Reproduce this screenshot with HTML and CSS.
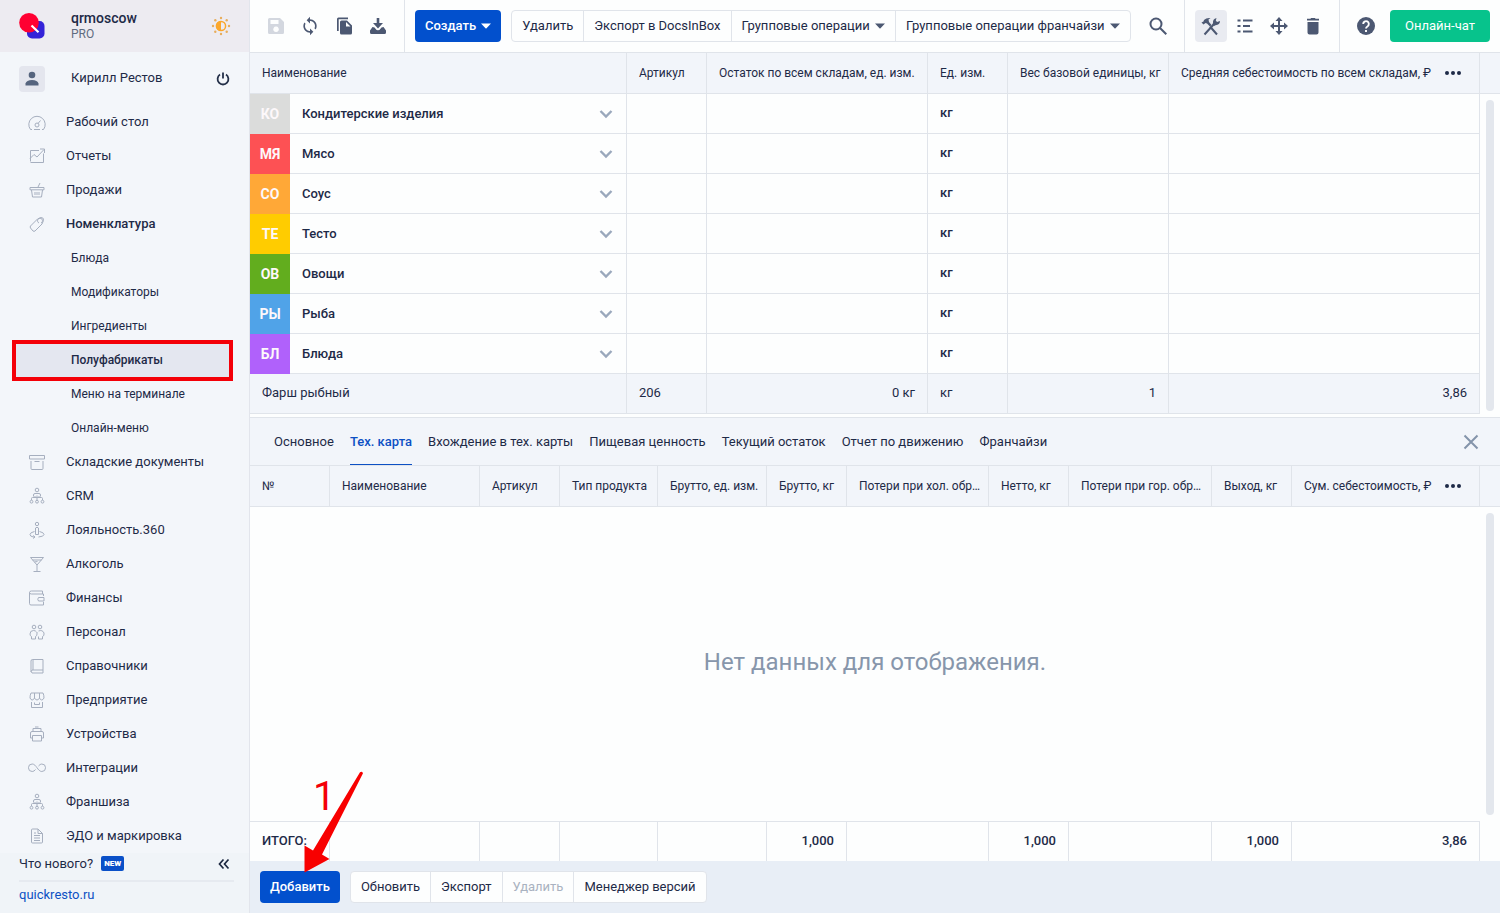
FILE: index.html
```html
<!DOCTYPE html>
<html lang="ru">
<head>
<meta charset="utf-8">
<title>Полуфабрикаты — Quick Resto</title>
<link rel="stylesheet" href="styles.css">
</head>
<body>
<svg class="sprite" aria-hidden="true">
  <symbol id="org" viewBox="0 0 18 18"><circle cx="9" cy="3" r="1.8"/><path d="M5.5 9.500V8q0-1.500 1.500-1.500h4q1.500 0 1.500 1.500v1.500M3.500 13v-1.500q0-1 1-1h9q1 0 1 1V13M9 8.500V13M7 9v1.500M11 9v1.500"/><circle cx="3.500" cy="14.700" r="1.400"/><circle cx="9" cy="14.700" r="1.400"/><circle cx="14.500" cy="14.700" r="1.400"/></symbol>
  <symbol id="chev" viewBox="0 0 14 14"><path d="M1.500 4L7 9.500 12.500 4" fill="none" stroke="currentColor" stroke-width="2.400"/></symbol>
  <symbol id="caret" viewBox="0 0 10 6"><path d="M0 .5h10L5.500 5.300q-.5.5-1 0z" fill="currentColor"/></symbol>
</svg>

<div class="app">
  <aside class="sidebar">
    <header class="brand">
      <svg class="logo" viewBox="0 0 26 26"><rect x="8" y="8" width="17.500" height="17.500" rx="5" fill="#3422d8"/><circle cx="10" cy="9.800" r="9.800" fill="#ff0032"/><path d="M12.500 12.500l7 6.700" stroke="#fff" stroke-width="2.200"/></svg>
      <div class="brand-text"><strong>qrmoscow</strong><span>PRO</span></div>
      <button class="plain sun" aria-label="Тема"><svg viewBox="0 0 20 20" width="20" height="20"><g fill="#e8ad5c"><circle cx="10" cy="2" r="1.200"/><circle cx="10" cy="18" r="1.200"/><circle cx="2" cy="10" r="1.200"/><circle cx="18" cy="10" r="1.200"/><circle cx="4.300" cy="4.300" r="1.200"/><circle cx="15.700" cy="4.300" r="1.200"/><circle cx="4.300" cy="15.700" r="1.200"/><circle cx="15.700" cy="15.700" r="1.200"/></g><circle cx="10" cy="10" r="4.600" fill="none" stroke="#fba72c" stroke-width="1.500"/><path d="M10 5a5 5 0 0 0 0 10z" fill="#fba72c"/></svg></button>
    </header>
    <div class="user">
      <span class="avatar"><svg viewBox="0 0 16 16" width="16" height="16" fill="#55647e"><circle cx="8" cy="4" r="3.300"/><path d="M1.500 14.500v-2Q2.500 9 8 9t6.500 3.500v2z"/></svg></span>
      <span class="user-name">Кирилл Рестов</span>
      <button class="plain" aria-label="Выход"><svg viewBox="0 0 14 14" width="14" height="14" fill="none" stroke="#243049" stroke-width="1.800"><path d="M7 .5v6M4 2.600a5.400 5.400 0 1 0 6 0"/></svg></button>
    </div>
    <nav class="nav">
      <a href="#"><svg viewBox="0 -1 18 18"><path d="M2.500 15.500a8.200 8.200 0 1 1 13 0h-1.500M2.500 15.500H4M6 15.500h6M10 9.500l2.500-3"/><circle cx="9" cy="11" r="2"/></svg>Рабочий стол</a>
      <a href="#"><svg viewBox="0 0 18 18"><path d="M11 3.500H2.500v11M15.500 6.500v9h-13M2 11.500l4-4 3 2.500 7-7.500M12 2h4.500v4"/></svg>Отчеты</a>
      <a href="#"><svg viewBox="0 0 18 18"><path d="M2 6.500h14v2.300H2zM3.500 9l1 7h9l1-7M10 6l2-4M7 11v3M9 11v3M11 11v3"/></svg>Продажи</a>
      <a href="#" class="open"><svg viewBox="0 0 18 18"><path d="M2.500 11l7-7 3.500-1.500q3 0 2.500 3L14 9l-7 7q-1 .7-2 0l-2.500-3q-.7-1 0-2zM11 8a2.500 2.500 0 1 1 2 0"/></svg>Номенклатура</a>
      <a href="#" class="sub">Блюда</a>
      <a href="#" class="sub">Модификаторы</a>
      <a href="#" class="sub">Ингредиенты</a>
      <a href="#" class="sub current" aria-current="page">Полуфабрикаты</a>
      <a href="#" class="sub">Меню на терминале</a>
      <a href="#" class="sub">Онлайн-меню</a>
      <a href="#"><svg viewBox="0 0 18 18"><path d="M1.500 2.500h15V6h-15zM3 8v7.500q0 1 1 1h10q1 0 1-1V8M6.500 8.500h5"/></svg>Складские документы</a>
      <a href="#"><svg><use href="#org"/></svg>CRM</a>
      <a href="#"><svg viewBox="0 0 18 18"><circle cx="9" cy="3" r="1.700"/><path d="M7.500 13.500V7q1.500-1.500 3 0v6.500zM6.500 10.500q-4.500 1-4.500 3t3.500 2.500l1.500 0M11.500 10.500q4.500 1 4.500 3t-5.500 2.500M5 14.500l2 1.500-2 1.500"/></svg>Лояльность.360</a>
      <a href="#"><svg viewBox="0 0 18 18"><path d="M2.500 2.500h13L9 10zM4.500 5h9M6.500 7l3-.5M9 10v6M5.500 16.500h7"/></svg>Алкоголь</a>
      <a href="#"><svg viewBox="0 0 18 18"><path d="M15.500 7V5H3.500Q1.500 5 1.500 3.500t2-1.500h11v3M1.500 3.500v11q0 1.500 1.500 1.500h12.500v-3M10.500 8.500h5.500v3.500h-5.500q-1.500-1.800 0-3.500z"/></svg>Финансы</a>
      <a href="#"><svg viewBox="0 0 18 18"><circle cx="6" cy="4" r="1.800"/><circle cx="12" cy="4" r="1.800"/><path d="M8.500 9q-1-1.500-3-1.500Q2 7.500 2 11q0 2 1.500 2.500v2.500h4v-2.500Q9 13 9 11V9M10.500 8q4-1.500 5.500 2 .5 3-1.500 3.500V16h-4v-2.500"/></svg>Персонал</a>
      <a href="#"><svg viewBox="0 0 18 18"><path d="M3 15V4q0-1.500 1.500-1.500H15v13.500H4q-1.500-1.500 0-3h11M5 2.500V13"/></svg>Справочники</a>
      <a href="#"><svg viewBox="0 0 18 18"><path d="M3 2h12q1 2 1 5-1 2-2.300 2T11.500 7q-1 2-2.500 2T6.500 7q-1 2-2.300 2T2 7q0-3 1-5zM6.500 2v5M11.500 2v5M3.500 11v5.500h11V11M6.500 11.500v2h5v-2"/></svg>Предприятие</a>
      <a href="#"><svg viewBox="0 0 18 18"><path d="M5 6V3.500h8V6M7 2h3.500M4 13H2.500V8q0-1.500 1.500-1.500h10q1.500 0 1.500 1.500v5H14M4.500 10.500h9v5.500h-9z"/></svg>Устройства</a>
      <a href="#"><svg viewBox="0 0 18 18"><path d="M10.500 7q1.500-2 3.300-2a3.600 3.600 0 1 1 0 7.500c-4 0-5.500-7.500-9.600-7.500a3.600 3.600 0 1 0 0 7.500q2 0 3.300-2"/></svg>Интеграции</a>
      <a href="#"><svg><use href="#org"/></svg>Франшиза</a>
      <a href="#"><svg viewBox="0 0 18 18"><path d="M4.500 2H10l4.500 4.500V15q0 1-1 1h-9q-1 0-1-1V3q0-1 1-1zM10 2v4.500h4.500M6 8.500h6M6 11h6M6 6h2M6 13.500h6"/></svg>ЭДО и маркировка</a>
    </nav>
    <footer class="side-foot">
      <div class="whats-new"><a href="#">Что нового?</a><span class="badge">NEW</span>
        <button class="plain" aria-label="Свернуть меню"><svg viewBox="0 0 12 12" width="12" height="12" fill="none" stroke="#1b2740" stroke-width="1.700"><path d="M5.500 1.500L1.500 6l4 4.500M10.500 1.500L6.500 6l4 4.500"/></svg></button></div>
      <a class="site" href="#">quickresto.ru</a>
    </footer>
  </aside>

  <main class="main">
    <div class="toolbar">
      <div class="tools">
        <button class="tool off" aria-label="Сохранить" disabled><svg viewBox="0 0 20 20"><path fill-rule="evenodd" d="M3.500 2H14l4 4v10.500q0 1.500-1.500 1.500h-13Q2 18 2 16.500v-13Q2 2 3.500 2zM4.500 4v4h8V4zM10 10.500a2.800 2.800 0 1 0 .1 0z"/></svg></button>
        <button class="tool" aria-label="Обновить"><svg viewBox="0 0 24 24"><path d="M12 4V1L8 5l4 4V6c3.310 0 6 2.690 6 6 0 1.010-.25 1.970-.7 2.800l1.460 1.460C19.540 15.030 20 13.570 20 12c0-4.420-3.580-8-8-8zm0 14c-3.310 0-6-2.690-6-6 0-1.010.25-1.970.7-2.800L5.240 7.740C4.460 8.970 4 10.430 4 12c0 4.420 3.580 8 8 8v3l4-4-4-4v3z"/></svg></button>
        <button class="tool" aria-label="Копировать"><svg viewBox="0 0 20 20"><path d="M3 15V3q0-1.500 1.500-1.500H14v1.700H4.700V15z"/><path fill-rule="evenodd" d="M7.500 4.500H13l5 5v7.500q0 1.500-1.500 1.500h-9Q6 18.500 6 17V6q0-1.500 1.500-1.500zM12 6v4.500h4.500z"/></svg></button>
        <button class="tool" aria-label="Загрузить"><svg viewBox="0 0 20 20"><path d="M8.700 2h2.600v5H15l-5 5.500L5 7h3.700z"/><path d="M4.500 11l2 .5Q10 17 13.500 11.500l2-.5L18 14.500v2q0 1.500-1.500 1.500h-13Q2 18 2 16.500v-2z"/></svg></button>
      </div>
      <div class="actions">
        <button class="btn primary">Создать <svg class="caret"><use href="#caret"/></svg></button>
        <div class="group">
          <button>Удалить</button><button>Экспорт в DocsInBox</button><button>Групповые операции <svg class="caret"><use href="#caret"/></svg></button><button>Групповые операции франчайзи <svg class="caret"><use href="#caret"/></svg></button>
        </div>
        <button class="tool search" aria-label="Поиск"><svg viewBox="0 0 20 20" fill="none" stroke="currentColor" stroke-width="2"><circle cx="8" cy="8" r="5.500"/><path d="M12 12l6.300 6.300"/></svg></button>
      </div>
      <div class="tools">
        <button class="tool on" aria-label="Настройки"><svg viewBox="0 0 20 20"><path d="M3.500 18.500L13 8M9 10.500l7 8" stroke="currentColor" stroke-width="2" fill="none"/><path d="M.5 6.500l2-1L3 4Q5.500 1.500 9.500 2L7.500 3.500 8 6l2.500 3-1.500 1.500L6 7.500 4.500 7 2.500 8.500zM12 7q-.5-4 3.500-5l-.7 2.500L16 6l3-1q0 4-4.500 4.200L13 10l-1.500-1.500z"/></svg></button>
        <button class="tool" aria-label="Список"><svg viewBox="0 0 20 20"><path d="M2.500 3.500h3v2h-3zM2.500 9h3v2h-3zM2.500 14.500h3v2h-3zM8 3.500h9.500v2H8zM8 9h7v2H8zM8 14.500h9.500v2H8z"/></svg></button>
        <button class="tool" aria-label="Переместить"><svg viewBox="0 0 20 20"><path d="M10 1l3.500 4H11v4h4V6.500l4 3.500-4 3.500V11h-4v4h2.500L10 19l-3.500-4H9v-4H5v2.500L1 10l4-3.500V9h4V5H6.500z"/></svg></button>
        <button class="tool" aria-label="Удалить запись"><svg viewBox="0 0 20 20"><path d="M4.500 6h11v10.500q0 2-2 2h-7q-2 0-2-2zM4 2.800h3.500L8 2h4l.5.800H16v1.800H4z"/></svg></button>
      </div>
      <div class="help">
        <button class="tool" aria-label="Помощь"><svg viewBox="0 0 20 20"><circle cx="10" cy="10" r="9"/><path d="M7.200 8a2.800 2.800 0 1 1 4.500 2.200Q10 11.300 10 12.500M10 14v2" fill="none" stroke="#fff" stroke-width="1.900"/></svg></button>
        <button class="btn chat">Онлайн-чат</button>
      </div>
    </div>

    <section class="list">
      <table class="grid">
        <colgroup><col><col class="w80"><col class="w221"><col class="w80"><col class="w161"><col class="w311"><col class="w20"></colgroup>
        <thead><tr><th>Наименование</th><th>Артикул</th><th>Остаток по всем складам, ед. изм.</th><th>Ед. изм.</th><th>Вес базовой единицы, кг</th><th><div class="last">Средняя себестоимость по всем складам, ₽<button class="plain dots" aria-label="Колонки"><i></i><i></i><i></i></button></div></th><td></td></tr></thead>
        <tbody>
          <tr class="cat"><td><div class="name"><span class="tile gray">КО</span>Кондитерские изделия<svg><use href="#chev"/></svg></div></td><td></td><td></td><td>кг</td><td></td><td></td></tr>
          <tr class="cat"><td><div class="name"><span class="tile red">МЯ</span>Мясо<svg><use href="#chev"/></svg></div></td><td></td><td></td><td>кг</td><td></td><td></td></tr>
          <tr class="cat"><td><div class="name"><span class="tile orange">СО</span>Соус<svg><use href="#chev"/></svg></div></td><td></td><td></td><td>кг</td><td></td><td></td></tr>
          <tr class="cat"><td><div class="name"><span class="tile yellow">ТЕ</span>Тесто<svg><use href="#chev"/></svg></div></td><td></td><td></td><td>кг</td><td></td><td></td></tr>
          <tr class="cat"><td><div class="name"><span class="tile green">ОВ</span>Овощи<svg><use href="#chev"/></svg></div></td><td></td><td></td><td>кг</td><td></td><td></td></tr>
          <tr class="cat"><td><div class="name"><span class="tile blue">РЫ</span>Рыба<svg><use href="#chev"/></svg></div></td><td></td><td></td><td>кг</td><td></td><td></td></tr>
          <tr class="cat"><td><div class="name"><span class="tile violet">БЛ</span>Блюда<svg><use href="#chev"/></svg></div></td><td></td><td></td><td>кг</td><td></td><td></td></tr>
          <tr class="picked"><td>Фарш рыбный</td><td>206</td><td class="num">0 кг</td><td>кг</td><td class="num">1</td><td class="num">3,86</td></tr>
        </tbody>
      </table>
      <div class="scroll"></div>
    </section>

    <section class="detail">
      <div class="tabs">
        <button>Основное</button><button class="sel">Тех. карта</button><button>Вхождение в тех. карты</button><button>Пищевая ценность</button><button>Текущий остаток</button><button>Отчет по движению</button><button>Франчайзи</button>
        <button class="plain close" aria-label="Закрыть"><svg viewBox="0 0 16 16" width="16" height="16" stroke="#8494aa" stroke-width="2"><path d="M1.500 1.500l13 13M14.500 1.500l-13 13"/></svg></button>
      </div>
      <div class="card">
        <table class="grid fill">
          <colgroup><col class="w80"><col><col class="w80"><col class="w98"><col class="w109"><col class="w80"><col class="w142"><col class="w80"><col class="w143"><col class="w80"><col class="w188"><col class="w20"></colgroup>
          <thead><tr><th>№</th><th>Наименование</th><th>Артикул</th><th>Тип продукта</th><th>Брутто, ед. изм.</th><th>Брутто, кг</th><th>Потери при хол. обр…</th><th>Нетто, кг</th><th>Потери при гор. обр…</th><th>Выход, кг</th><th><div class="last">Сум. себестоимость, ₽<button class="plain dots" aria-label="Колонки"><i></i><i></i><i></i></button></div></th><td></td></tr></thead>
          <tbody><tr><td class="empty" colspan="12">Нет данных для отображения.</td></tr></tbody>
          <tfoot><tr><td>ИТОГО:</td><td></td><td></td><td></td><td></td><td class="num">1,000</td><td></td><td class="num">1,000</td><td></td><td class="num">1,000</td><td class="num">3,86</td><td></td></tr></tfoot>
        </table>
        <div class="scroll"></div>
      </div>
      <div class="bottom">
        <button class="btn primary">Добавить</button>
        <div class="group"><button>Обновить</button><button>Экспорт</button><button disabled>Удалить</button><button>Менеджер версий</button></div>
        <div class="hint"><span>1</span><svg viewBox="0 0 60 102" width="60" height="102"><path d="M57 1.200q2-1.200 3 1L19 83.500l7.500 4.500L1.500 101.500V74.500l8.500 5z" fill="#f80000"/></svg></div>
      </div>
    </section>
  </main>
</div>
</body>
</html>
```
FILE: styles.css
```css
* { box-sizing: border-box; }
body { margin: 0; font: 13px/16px Roboto, "Liberation Sans", sans-serif; color: #1e2a47; background: #fdfefe; }
a { color: inherit; text-decoration: none; }
button { font: inherit; color: inherit; border: 0; background: none; padding: 0; margin: 0; cursor: pointer; }
.sprite { display: none; }
.plain { display: flex; align-items: center; justify-content: center; }
.app { display: grid; grid-template-columns: 250px minmax(0, 1fr); height: 100vh; }

.sidebar { display: flex; flex-direction: column; background: #f3f6fa; border-right: 1px solid #e2e5ec; min-height: 0; }
.brand { display: flex; align-items: center; height: 52px; padding: 0 18px 0 19px; background: #edebf1; }
.logo { width: 26px; height: 26px; margin-right: 26px; }
.brand-text { flex: 1; display: flex; flex-direction: column; }
.brand-text strong { font-size: 14px; line-height: 15px; font-weight: 500; }
.brand-text span { font-size: 12px; line-height: 16px; color: #5f6b80; }
.user { display: flex; align-items: center; height: 53px; padding: 0 19px; }
.avatar { display: flex; align-items: center; justify-content: center; width: 26px; height: 26px; margin-right: 26px; border-radius: 4px; background: #e4e6ee; }
.user-name { flex: 1; padding-bottom: 2px; }
.nav { flex: 1; min-height: 0; }
.nav a { display: flex; align-items: center; height: 34px; padding-left: 28px; }
.nav svg { width: 18px; height: 18px; margin-right: 20px; fill: none; stroke: #a6afbf; stroke-width: 1; }
.nav .open { font-weight: 500; }
.nav .sub { font-size: 12px; padding-left: 71px; }
.nav .current { position: relative; margin: 0 17px 0 16px; padding-left: 55px; font-weight: 500; background: #e4e7f0; }
.current::after { content: ""; position: absolute; inset: -3px -1px -4px -4px; border: 4px solid #f40008; }
.side-foot { padding: 0 15px 0 19px; background: #f0f4f8; }
.whats-new { display: flex; align-items: center; height: 29px; padding-bottom: 6px; border-bottom: 2px solid #e6eaf0; }
.whats-new .plain { margin-left: auto; margin-right: 4px; }
.badge { margin-left: 8px; padding: 1px 3px 0; font-size: 8px; line-height: 14px; font-weight: 900; color: #fff; background: #0a50c8; border-radius: 2px; }
.site { display: block; padding: 5px 0 10px; color: #0d50c4; }

.main { display: flex; flex-direction: column; min-width: 0; min-height: 0; }
.toolbar { display: flex; height: 53px; border-bottom: 1px solid #e0e4ea; }
.tools { display: flex; align-items: center; gap: 2px; padding: 0 10px; border-right: 1px solid #e0e4ea; }
.tool { display: flex; align-items: center; justify-content: center; width: 32px; height: 32px; border-radius: 4px; color: #4c5872; }
.tool svg { width: 20px; height: 20px; }
.tool svg:not([fill]) { fill: currentColor; }
.tool.off { color: #d3d7df; }
.tool.on { background: #e9ebf1; }
.actions { flex: 1; display: flex; align-items: center; gap: 10px; padding: 0 10px; border-right: 1px solid #e0e4ea; white-space: nowrap; }
.search { margin-left: auto; }
.btn { height: 32px; padding: 0 10px; border-radius: 4px; font-weight: 500; color: #fff; }
.primary { background: #0250cd; }
.chat { width: 100px; background: #07c38c; font-weight: 400; }
.caret { width: 10px; height: 6px; margin-left: 2px; vertical-align: 1px; }
.group { display: flex; height: 32px; border: 1px solid #e0e4ea; border-radius: 4px; background: #fdfefe; white-space: nowrap; }
.group button { padding: 0 10px; border-left: 1px solid #e0e4ea; }
.group button:first-child { border-left: 0; }
.group .caret { color: #4c5872; }
.group button:disabled { color: #a9b2c0; }
.help { display: flex; align-items: center; gap: 8px; padding: 0 10px; }

.list { position: relative; padding-bottom: 3px; }
.grid { width: 100%; table-layout: fixed; border-collapse: separate; border-spacing: 0; }
.w20 { width: 20px; } .w80 { width: 80px; } .w98 { width: 98px; } .w109 { width: 109px; } .w142 { width: 142px; } .w143 { width: 143px; }
.w161 { width: 161px; } .w188 { width: 188px; } .w221 { width: 221px; } .w311 { width: 311px; }
.grid th, .grid td { height: 40px; padding: 0 12px 2px; text-align: left; white-space: nowrap; border-right: 1px solid #e0e4ea; border-bottom: 1px solid #e0e4ea; }
.grid thead th { height: 41px; padding: 0 4px 0 12px; font-size: 12px; font-weight: 400; overflow: hidden; text-overflow: ellipsis; }
.grid thead tr { background: #f2f5fa; }
.grid thead td { border-right: 0; padding: 0; }
.grid .num { text-align: right; }
.last { display: flex; align-items: center; justify-content: space-between; }
.dots { gap: 2px; width: 18px; margin-right: 13px; }
.dots i { width: 4px; height: 4px; border-radius: 50%; background: #1e2a47; }
.cat { font-weight: 500; }
.grid .cat td:first-child { padding: 0 13px 0 0; }
.name { display: flex; align-items: center; }
.name svg { width: 14px; height: 14px; margin-left: auto; color: #9aa8bc; }
.tile { display: flex; align-items: center; justify-content: center; width: 40px; height: 40px; margin: 0 12px -1px 0; font-size: 14px; font-weight: 700; color: #fdf8fa; }
.gray { background: #dbdcdb; } .red { background: #fd5154; } .orange { background: #ffa837; } .yellow { background: #ffcc00; }
.green { background: #62ad1e; } .blue { background: #50a3e8; } .violet { background: #b061fb; }
.picked { background: #f2f5fa; }
.scroll { position: absolute; right: 6px; top: 47px; bottom: 6px; width: 8px; border-radius: 4px; background: #e3e7ed; }

.detail { flex: 1; display: flex; flex-direction: column; min-height: 0; border-top: 1px solid #e0e4ea; }
.tabs { display: flex; gap: 16px; height: 48px; padding: 0 21px 0 24px; background: #f2f5fa; border-bottom: 1px solid #e0e4ea; white-space: nowrap; }
.tabs .sel { font-weight: 500; color: #0d50c4; box-shadow: inset 0 -1px #0d50c4; }
.close { margin-left: auto; }
.card { position: relative; flex: 1; min-height: 0; }
.fill { height: 100%; }
.card .scroll { bottom: 46px; }
.grid .empty { height: auto; padding-bottom: 5px; border: 0; text-align: center; font-size: 24px; color: #8796ab; }
.grid tfoot td { border-top: 1px solid #e0e4ea; border-bottom: 0; font-weight: 500; }
.grid tfoot td:last-child { border: 0; }
.bottom { position: relative; display: flex; align-items: center; gap: 10px; height: 52px; padding: 0 10px; background: #e8eef6; }
.hint { position: absolute; left: 53px; bottom: 40px; height: 102px; color: #f40008; pointer-events: none; }
.hint span { position: absolute; left: 10px; top: 6px; font-size: 40px; line-height: 40px; }
```
